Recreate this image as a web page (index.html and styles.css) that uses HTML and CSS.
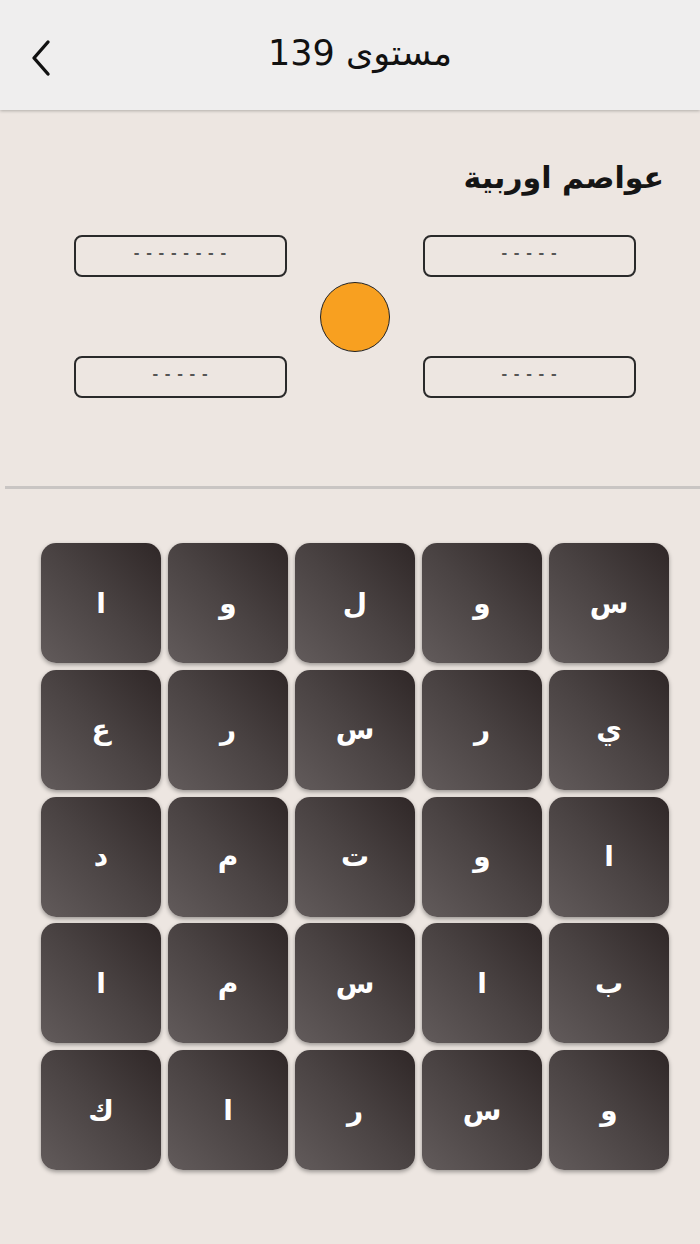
FILE: index.html
```html
<!DOCTYPE html>
<html lang="ar">
<head>
<meta charset="utf-8">
<link rel="stylesheet" href="styles.css">
</head>
<body>
<header class="topbar">
  <svg class="back" viewBox="0 0 24 40" width="24" height="40"><path d="M19 4 L5 20 L19 36" fill="none" stroke="#111" stroke-width="3.4" stroke-linecap="round" stroke-linejoin="round"/></svg>
  <h1 class="title" dir="rtl">مستوى 139</h1>
</header>
<main class="content">
  <h2 class="category" dir="rtl">عواصم اوربية</h2>
  <section class="answers">
    <div class="slot">- - - - - - - -</div>
    <div class="dot"></div>
    <div class="slot">- - - - -</div>
    <div class="slot">- - - - -</div>
    <div class="slot">- - - - -</div>
  </section>
  <hr class="divider">
  <section class="board" dir="rtl">
    <div class="tile">س</div><div class="tile">و</div><div class="tile">ل</div><div class="tile">و</div><div class="tile">ا</div>
    <div class="tile">ي</div><div class="tile">ر</div><div class="tile">س</div><div class="tile">ر</div><div class="tile">ع</div>
    <div class="tile">ا</div><div class="tile">و</div><div class="tile">ت</div><div class="tile">م</div><div class="tile">د</div>
    <div class="tile">ب</div><div class="tile">ا</div><div class="tile">س</div><div class="tile">م</div><div class="tile">ا</div>
    <div class="tile">و</div><div class="tile">س</div><div class="tile">ر</div><div class="tile">ا</div><div class="tile">ك</div>
  </section>
</main>
</body>
</html>
```
FILE: styles.css
```css
* { box-sizing: border-box; }
html, body { margin: 0; padding: 0; }
body {
  width: 700px;
  height: 1244px;
  background: #ede6e1;
  font-family: "DejaVu Sans", "Noto Sans", sans-serif;
  overflow: hidden;
}
.topbar {
  height: 110px;
  background: #efeeee;
  box-shadow: 0 1px 3px rgba(0,0,0,0.25);
  display: flex;
  align-items: center;
  justify-content: center;
  position: relative;
}
.back {
  position: absolute;
  left: 29px;
  top: 38px;
}
.title {
  margin: 0 0 0 20px;
  font-size: 35px;
  font-weight: normal;
  color: #111;
  line-height: 1;
  padding-bottom: 4px;
}
.content {
  padding-top: 50px;
}
.category {
  margin: 0 36px 0 0;
  text-align: right;
  font-size: 30px;
  font-weight: bold;
  color: #151515;
  line-height: 36px;
}
.answers {
  margin: 39px 64px 0 74px;
  display: grid;
  grid-template-columns: 213px 1fr 213px;
  grid-template-rows: 42px 42px;
  row-gap: 79px;
  align-items: center;
}
.slot {
  height: 42px;
  border: 2px solid #2a2a2a;
  border-radius: 8px;
  text-align: center;
  font-family: "Liberation Sans", sans-serif;
  font-size: 17px;
  font-weight: bold;
  color: #555;
  line-height: 32px;
  letter-spacing: 1px;
}
.dot {
  grid-column: 2;
  grid-row: 1 / 3;
  justify-self: center;
  width: 70px;
  height: 70px;
  border-radius: 50%;
  background: #f8a020;
  border: 1.5px solid #222;
}
.answers .slot:nth-child(1) { grid-column: 1; grid-row: 1; }
.answers .slot:nth-child(3) { grid-column: 3; grid-row: 1; }
.answers .slot:nth-child(4) { grid-column: 1; grid-row: 2; }
.answers .slot:nth-child(5) { grid-column: 3; grid-row: 2; }
.divider {
  margin: 88px 0 0 5px;
  border: none;
  height: 3px;
  background: #c9c5c3;
}
.board {
  margin: 54px 31px 0 41px;
  display: grid;
  grid-template-columns: repeat(5, 120px);
  grid-auto-rows: 120px;
  column-gap: 7px;
  row-gap: 6.75px;
}
.tile {
  border-radius: 15px;
  background: linear-gradient(45deg, #625b5b 0%, #4a4343 50%, #2f2727 100%);
  box-shadow: 0 2px 4px rgba(0,0,0,0.35);
  display: flex;
  align-items: center;
  justify-content: center;
  color: #fff;
  font-size: 28px;
  font-weight: bold;
  padding-bottom: 0;
}
```
